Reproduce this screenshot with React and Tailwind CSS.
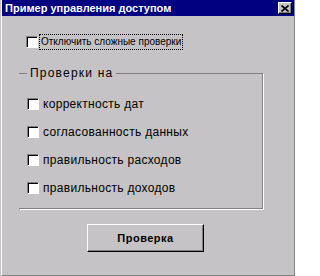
import React from 'react';

const font = { fontFamily: '"Liberation Sans", Arial, sans-serif' };

function Check({ label, focused }) {
  return (
    <div className="flex items-center h-[16px]">
      <span className="w-[12px] h-[12px] shrink-0 bg-white border border-t-[#808080] border-l-[#808080] border-b-white border-r-white shadow-[inset_1px_1px_0_#000]" />
      {focused ? (
        <span className="ml-px px-px h-[16px] flex items-center border border-dotted border-black text-[10px] leading-none text-black">
          {label}
        </span>
      ) : (
        <span className="ml-[4px] text-[12px] tracking-[0.3px] leading-none text-black">{label}</span>
      )}
    </div>
  );
}

export default function App() {
  const items = [
    'корректность дат',
    'согласованность данных',
    'правильность расходов',
    'правильность доходов',
  ];

  return (
    <div className="w-[295px] h-[276px] bg-[#c6c3c6] pl-px select-none" style={font}>
      <div className="h-full border-l border-white border-r border-r-[#808080] border-b border-b-[#808080] flex flex-col">
        {/* title bar */}
        <div className="h-[16px] bg-[#000080] flex items-center justify-between pl-[3px] pr-[2px]">
          <span className="text-white font-bold text-[11px] leading-none">Пример управления доступом</span>
          <button className="w-[14px] h-[12px] bg-[#c6c3c6] border border-t-white border-l-white border-b-black border-r-black shadow-[inset_-1px_-1px_0_#808080] flex items-center justify-center">
            <svg width="8" height="7" viewBox="0 0 8 7">
              <path d="M0.5 0.5 L7.5 6.5 M7.5 0.5 L0.5 6.5" stroke="#000" strokeWidth="1.6" />
            </svg>
          </button>
        </div>

        <div className="ml-[24px] mt-[18px]">
          <Check label="Отключить сложные проверки" focused />
        </div>

        <fieldset className="ml-[17px] mt-[16px] w-[244px] border border-l-0 border-[#808080] shadow-[1px_1px_0_#fff] pl-[8px] pb-[12px]">
          <legend className="px-[3px] text-[12px] tracking-[1.2px] leading-[14px] text-black">Проверки на</legend>
          <div className="mt-[16px] flex flex-col gap-[12px]">
            {items.map((t) => (
              <Check key={t} label={t} />
            ))}
          </div>
        </fieldset>

        <button className="ml-[85px] mt-[15px] w-[117px] h-[28px] bg-[#c6c3c6] border border-t-white border-l-white border-b-black border-r-black shadow-[inset_-1px_-1px_0_#808080] text-[11px] font-bold tracking-[0.5px] text-black">
          Проверка
        </button>
      </div>
    </div>
  );
}
